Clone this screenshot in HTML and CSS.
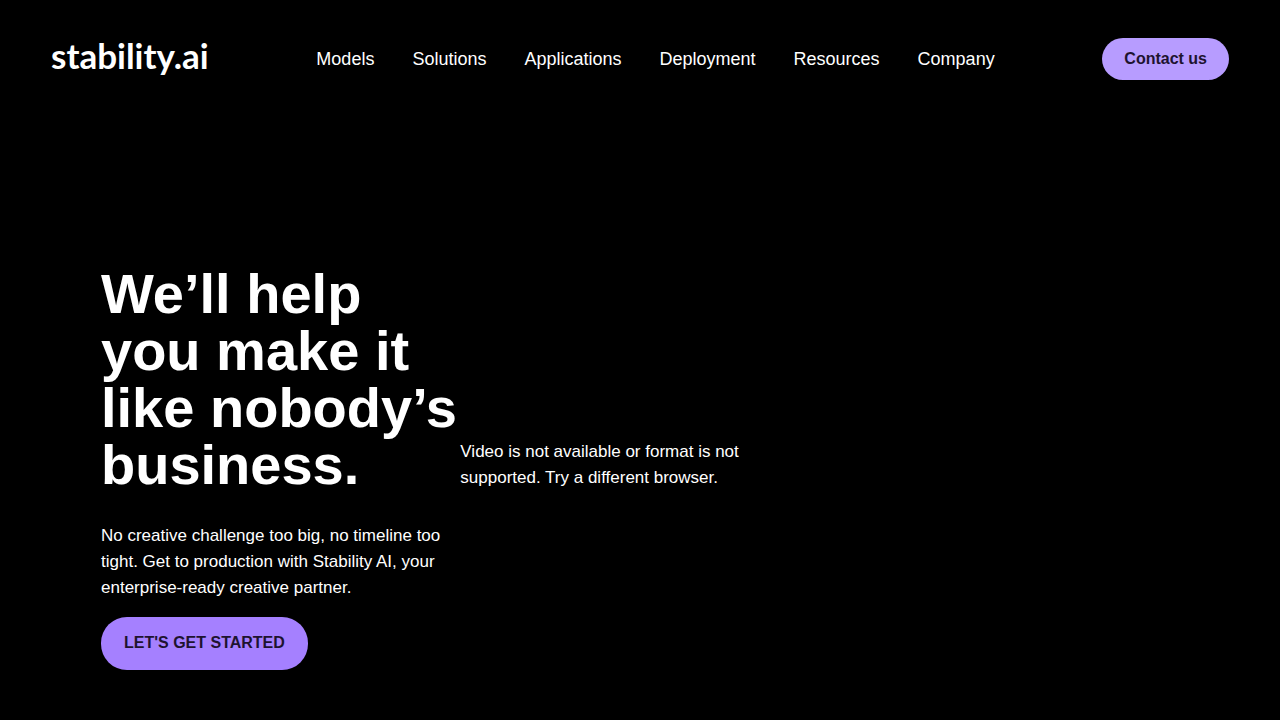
FILE: index.html
```html
<!DOCTYPE html>
<html lang="en">

<head>
    <meta charset="UTF-8">
    <meta name="viewport" content="width=device-width, initial-scale=1.0">
    <title>Stability AI</title>
    <link rel="stylesheet" href="styles.css">
</head>

<body>
    <header class="header">
        <a class="logo" href="#">stability.ai</a>
        <nav class="nav">
            <a href="#">Models</a>
            <a href="#">Solutions</a>
            <a href="#">Applications</a>
            <a href="#">Deployment</a>
            <a href="#">Resources</a>
            <a href="#">Company</a>
        </nav>
        <button class="btn btn-contact" type="button">Contact us</button>
    </header>

    <main class="hero">
        <div class="hero-content">
            <h1>We’ll help<br>you make it<br>like nobody’s<br>business.</h1>
            <p class="hero-text">No creative challenge too big, no timeline too tight. Get to production with Stability AI, your enterprise-ready creative partner.</p>
            <button class="btn btn-start" type="button">LET'S GET STARTED</button>
        </div>
        <p class="video-message">Video is not available or format is not supported. Try a different browser.</p>
    </main>
</body>

</html>
```
FILE: styles.css
```css
* {
    box-sizing: border-box;
}

body {
    margin: 0;
    background-color: #000;
    color: #fff;
    font-family: "Liberation Sans", Arial, sans-serif;
    font-size: 17px;
    line-height: 26px;
}

a {
    color: inherit;
    text-decoration: none;
}

h1,
p {
    margin: 0;
}

.header {
    display: flex;
    align-items: center;
    justify-content: space-between;
    padding: 38px 51px;
}

.logo {
    padding-bottom: 8px;
    font-family: Lato, sans-serif;
    font-size: 35px;
    font-weight: 700;
    line-height: 34px;
}

.nav {
    display: flex;
    gap: 38px;
    font-size: 18px;
}

.btn {
    border: none;
    border-radius: 26px;
    color: #1e1330;
    font-family: inherit;
    font-size: 16px;
    font-weight: 700;
    line-height: 18px;
    cursor: pointer;
}

.btn-contact {
    padding: 12px 22px;
    background-color: #b79cff;
}

.btn-start {
    margin-top: 16px;
    padding: 17px 23px 18px;
    background-color: #a580ff;
}

.hero {
    display: grid;
    grid-template-columns: repeat(3, minmax(0, 1fr));
    align-items: start;
    padding: 147px 101px 50px;
}

.hero h1 {
    font-size: 56px;
    line-height: 57px;
    white-space: nowrap;
}

.hero-text {
    padding-right: 12px;
    margin-top: 30px;
}

.video-message {
    margin-top: 174px;
}
```
